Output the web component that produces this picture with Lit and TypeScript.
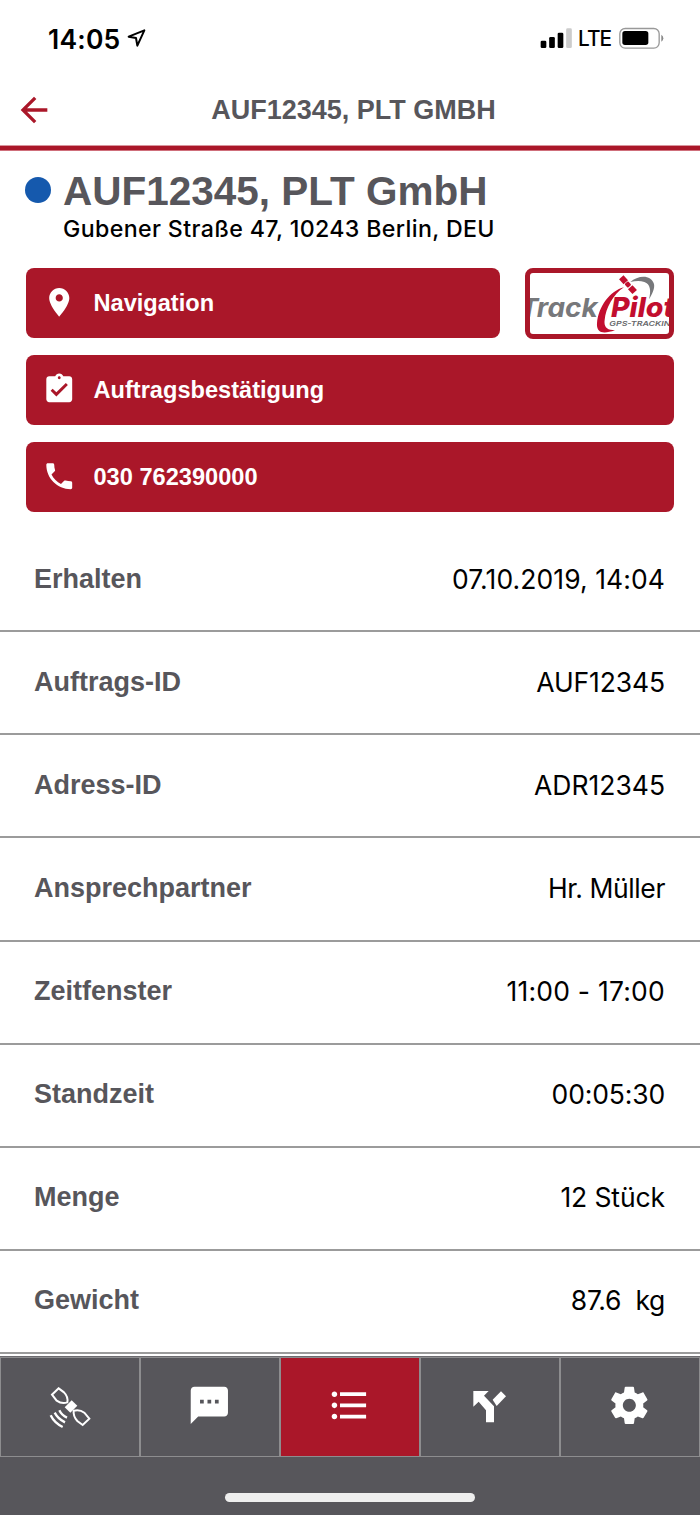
import { LitElement, html, css, svg } from "lit";
import { customElement, property } from "lit/decorators.js";
import { styleMap } from "lit/directives/style-map.js";

const icons = {
  back: "M20 11H7.83l5.59-5.59L12 4l-8 8 8 8 1.41-1.41L7.83 13H20v-2z",
  place:
    "M12 2C8.13 2 5 5.13 5 9c0 5.25 7 13 7 13s7-7.75 7-13c0-3.87-3.13-7-7-7zm0 9.5c-1.38 0-2.5-1.12-2.5-2.5s1.12-2.5 2.5-2.5 2.5 1.12 2.5 2.5-1.12 2.5-2.5 2.5z",
  confirm:
    "M19 3h-4.18C14.4 1.84 13.3 1 12 1c-1.3 0-2.4.84-2.82 2H5c-1.1 0-2 .9-2 2v14c0 1.1.9 2 2 2h14c1.1 0 2-.9 2-2V5c0-1.1-.9-2-2-2zm-7 0c.55 0 1 .45 1 1s-.45 1-1 1-1-.45-1-1 .45-1 1-1zm-2 14l-4-4 1.41-1.41L10 14.17l6.59-6.59L18 9l-8 8z",
  phone:
    "M6.62 10.79c1.44 2.83 3.76 5.14 6.59 6.59l2.2-2.2c.27-.27.67-.36 1.02-.24 1.12.37 2.33.57 3.57.57.55 0 1 .45 1 1V20c0 .55-.45 1-1 1-9.39 0-17-7.61-17-17 0-.55.45-1 1-1h3.5c.55 0 1 .45 1 1 0 1.25.2 2.45.57 3.57.11.35.03.74-.25 1.02l-2.2 2.2z",
  chat: "M20 2H4c-1.1 0-1.99.9-1.99 2L2 22l4-4h14c1.1 0 2-.9 2-2V4c0-1.1-.9-2-2-2zM9 11H7V9h2v2zm4 0h-2V9h2v2zm4 0h-2V9h2v2z",
  list: "M4 10.5c-.83 0-1.5.67-1.5 1.5s.67 1.5 1.5 1.5 1.5-.67 1.5-1.5-.67-1.5-1.5-1.5zm0-6c-.83 0-1.5.67-1.5 1.5S3.17 7.5 4 7.5 5.5 6.83 5.5 6 4.83 4.5 4 4.5zm0 12c-.83 0-1.5.68-1.5 1.5s.68 1.5 1.5 1.5 1.5-.68 1.5-1.5-.67-1.5-1.5-1.5zM7 19h14v-2H7v2zm0-6h14v-2H7v2zm0-8v2h14V5H7z",
  gear: "M19.43 12.98c.04-.32.07-.64.07-.98s-.03-.66-.07-.98l2.11-1.65c.19-.15.24-.42.12-.64l-2-3.46c-.12-.22-.39-.3-.61-.22l-2.49 1c-.52-.4-1.08-.73-1.69-.98l-.38-2.65C14.46 2.18 14.25 2 14 2h-4c-.25 0-.46.18-.49.42l-.38 2.65c-.61.25-1.17.59-1.69.98l-2.49-1c-.23-.09-.49 0-.61.22l-2 3.46c-.13.22-.07.49.12.64l2.11 1.65c-.04.32-.07.65-.07.98s.03.66.07.98l-2.11 1.65c-.19.15-.24.42-.12.64l2 3.46c.12.22.39.3.61.22l2.49-1c.52.4 1.08.73 1.69.98l.38 2.65c.03.24.24.42.49.42h4c.25 0 .46-.18.49-.42l.38-2.65c.61-.25 1.17-.59 1.69-.98l2.49 1c.23.09.49 0 .61-.22l2-3.46c.12-.22.07-.49-.12-.64l-2.11-1.65zM12 15.5c-1.93 0-3.5-1.57-3.5-3.5s1.57-3.5 3.5-3.5 3.5 1.57 3.5 3.5-1.57 3.5-3.5 3.5z",
};

const glyph = (d: string) =>
  html`<svg class="glyph" viewBox="0 0 24 24" fill="currentColor">${svg`<path d=${d}></path>`}</svg>`;

@customElement("status-bar")
class StatusBar extends LitElement {
  static styles = css`
    :host { display: flex; height: 76px; box-sizing: border-box; padding: 25px 36px 0 48px; justify-content: space-between; font-family: Inter, sans-serif; color: #000; }
    .side { display: flex; align-items: flex-start; }
    .time { font-size: 26.5px; line-height: 28px; font-weight: 600; width: 79px; white-space: nowrap; letter-spacing: 0.2px; }
    .loc { width: 20px; height: 19px; margin-top: 4px; }
    .signal { width: 32px; height: 21px; margin-top: 3px; }
    .net { font-size: 20.800px; line-height: 28px; width: 41px; margin-left: 6.500px; white-space: nowrap; letter-spacing: -0.9px; font-weight: 450; }
    .battery { width: 45px; height: 22px; margin-top: 2px; }
  `;
  render() {
    return html`
      <div class="side">
        <span class="time">14:05</span>
        <svg class="loc" viewBox="381 87 60 57">
          <path d="M386 110 L433 91 L412 137 L408 114 Z" fill="none" stroke="#000" stroke-width="6" stroke-linejoin="round" />
        </svg>
      </div>
      <div class="side">
        <svg class="signal" viewBox="567 84 96 63">
          <rect x="569" y="122" width="17" height="22" rx="4" />
          <rect x="594.500" y="111" width="17" height="33" rx="4" />
          <rect x="620" y="98" width="17" height="46" rx="4" />
          <rect x="645.500" y="85" width="17" height="59" rx="4" fill="#ccc" />
        </svg>
        <span class="net">LTE</span>
        <svg class="battery" viewBox="806 81 135 66">
          <rect x="808.500" y="85.500" width="118" height="59" rx="16" fill="none" stroke="#999" stroke-width="4" />
          <rect x="816" y="93" width="78" height="42" rx="8" />
          <path d="M933 104 Q939 108 939 114.500 Q939 121 933 125 Z" fill="#888" />
        </svg>
      </div>
    `;
  }
}

@customElement("title-bar")
class TitleBar extends LitElement {
  static styles = css`
    :host { display: block; }
    .bar { height: 69px; display: grid; grid-template-columns: 67px 1fr 60px; align-items: center; }
    .back { color: #aa1729; width: 40px; height: 40px; margin-left: 13.500px; margin-top: -2px; }
    .glyph { width: 100%; height: 100%; display: block; }
    .title { font: bold 27px/32px "Liberation Sans", sans-serif; color: #57565b; text-align: center; margin-top: -2px; white-space: nowrap; }
    .rule { height: 6px; background: linear-gradient(#d9959d 0 1px, #aa1729 1px 5px, #cf6f7b 5px 6px); }
  `;
  render() {
    return html`
      <div class="bar">
        <div class="back">${glyph(icons.back)}</div>
        <div class="title">AUF12345, PLT GMBH</div>
      </div>
      <div class="rule"></div>
    `;
  }
}

@customElement("action-button")
class ActionButton extends LitElement {
  @property() icon: keyof typeof icons = "place";
  @property() label = "";
  static styles = css`
    :host { display: flex; align-items: center; height: 70px; box-sizing: border-box; padding-left: 16px; background: #aa1729; color: #fff; border-radius: 8px; flex: 1; }
    .glyph { width: 34.500px; height: 34.500px; margin-top: -2.500px; display: block; }
    .label { font: bold 23.600px/30px "Liberation Sans", sans-serif; margin-left: 17px; white-space: nowrap; }
  `;
  render() {
    return html`${glyph(icons[this.icon])}<span class="label">${this.label}</span>`;
  }
}

@customElement("brand-logo")
class BrandLogo extends LitElement {
  static styles = css`
    :host { display: block; width: 149px; height: 71px; box-sizing: border-box; border: 5px solid #aa1729; border-radius: 8px; overflow: hidden; background: #fff; }
    .art { display: block; width: 139px; height: 61px; }
    .word { font: italic 700 78px Inter, sans-serif; }
    .accent { font: italic 800 83px Inter, sans-serif; }
    .small { font: italic 600 20px Inter, sans-serif; }
  `;
  render() {
    return html`
      <svg class="art" viewBox="61 55 417 183">
        <text class="word" x="30" y="188" fill="#77787b" textLength="234" lengthAdjust="spacingAndGlyphs">Track</text>
        <path d="M362 82 C384 62 424 58 433 88 C436 102 427 119 418 134 C425 108 422 88 404 82 C390 77 376 79 362 82 Z" fill="#77787b" />
        <path d="M343 98 C301 108 266 156 262 206 C260 236 281 239 316 227 C292 227 282 218 285 196 C288 161 311 118 343 98 Z" fill="#c20e2f" />
        <g transform="rotate(48 355 90)" fill="#c20e2f">
          <rect x="325" y="81" width="20" height="18" />
          <rect x="347" y="83" width="15" height="14" rx="3" />
          <rect x="365" y="81" width="20" height="18" />
        </g>
        <text class="accent" x="304" y="188" fill="#c20e2f" textLength="190" lengthAdjust="spacingAndGlyphs">Pilot</text>
        <text class="small" x="299" y="213" fill="#66676a" textLength="203" lengthAdjust="spacingAndGlyphs">GPS-TRACKING</text>
      </svg>
    `;
  }
}

@customElement("detail-row")
class DetailRow extends LitElement {
  @property() label = "";
  @property() value = "";
  @property({ type: Number }) tracking = 0;
  static styles = css`
    :host { display: flex; align-items: center; justify-content: space-between; height: 103.140px; box-sizing: border-box; border-bottom: 2px solid #9b9b9b; padding: 0 35px 2px 34px; }
    .label { font: bold 27px/32px "Liberation Sans", sans-serif; color: #57565b; }
    .value { font: 400 26.500px/32px Inter, sans-serif; color: #000; white-space: pre; }
  `;
  render() {
    return html`<span class="label">${this.label}</span
      ><span class="value" style=${styleMap({ letterSpacing: `${this.tracking}px` })}>${this.value}</span>`;
  }
}

@customElement("tab-bar")
class TabBar extends LitElement {
  static styles = css`
    :host { display: flex; flex-direction: column; align-items: center; background: #57565b; height: 159px; }
    .tabs { width: 100%; height: 101px; box-sizing: border-box; display: grid; grid-template-columns: 138px 138px 138px 138px 138px; column-gap: 2px; padding: 2px 1px 1px; background: linear-gradient(#6c6b6f 0 1px, #8d8d8f 1px); }
    .tab { background: #57565b; color: #fff; display: flex; align-items: center; justify-content: center; }
    .active { background: #aa1729; }
    .glyph { width: 44.700px; height: 44.700px; display: block; margin-top: -3px; margin-right: 0.600px; }
    .sat { width: 42px; height: 43px; margin-right: 1px; }
    .fork { width: 36px; height: 34px; margin-top: 0; margin-right: 1px; }
    .home { width: 250px; height: 9px; border-radius: 5px; background: #eee; margin-top: 35.500px; }
  `;
  render() {
    return html`
      <div class="tabs">
        <div class="tab">
          <svg class="sat" viewBox="147 137 126 129" fill="none" stroke="#fff" stroke-width="6">
            <path d="M176 144 L156 163 L170 181 Q186 192 202 186 Q205 169 192 156 Z" />
            <path d="M221 211 Q239 206 253 217 L268 235 L248 254 L232 242 Q219 228 221 211 Z" />
            <path d="M215 180 L232 196 L211 217 L194 201 Z" fill="#fff" stroke="none" />
            <path d="M152 225 Q163 248 188 260 M164 217 Q174 236 195 246 M178 210 Q185 225 201 232" stroke-width="7" />
          </svg>
        </div>
        <div class="tab">${glyph(icons.chat)}</div>
        <div class="tab active">${glyph(icons.list)}</div>
        <div class="tab">
          <svg class="fork" viewBox="366 148 108 102" fill="#fff">
            <path d="M370 151 H416 L402 165 L432 197 V245 H408 V209 L386 183 L370 198 Z" />
            <path d="M428 177 L453 152 L468 167 L440 196 Z" />
          </svg>
        </div>
        <div class="tab">${glyph(icons.gear)}</div>
      </div>
      <div class="home"></div>
    `;
  }
}

const details: [string, string, number][] = [
  ["Erhalten", "07.10.2019, 14:04", 0.08],
  ["Auftrags-ID", "AUF12345", -0.12],
  ["Adress-ID", "ADR12345", 0],
  ["Ansprechpartner", "Hr. Müller", -0.4],
  ["Zeitfenster", "11:00 - 17:00", 0.22],
  ["Standzeit", "00:05:30", -0.15],
  ["Menge", "12 Stück", -0.1],
  ["Gewicht", "87.6  kg", -0.3],
];

@customElement("app-root")
class AppRoot extends LitElement {
  static styles = css`
    :host { display: flex; flex-direction: column; height: 1515px; background: #fff; overflow: hidden; }
    .head { display: grid; grid-template-columns: 26px 1fr; column-gap: 12px; padding: 17px 25px 0; height: 117px; box-sizing: border-box; align-content: start; }
    .dot { width: 26px; height: 26px; border-radius: 50%; background: #1559ad; margin-top: 9px; }
    .name { font: bold 40.500px/46px "Liberation Sans", sans-serif; color: #57565b; white-space: nowrap; }
    .address { grid-column: 2; font: 500 23.200px/28px Inter, sans-serif; letter-spacing: 0.36px; color: #000; margin-top: 1px; white-space: nowrap; }
    .actions { display: flex; flex-direction: column; gap: 17px; padding: 0 26px; }
    .line { display: flex; height: 70px; gap: 25px; }
    .rows { margin-top: 17px; flex: 1; }
  `;
  render() {
    return html`
      <status-bar></status-bar>
      <title-bar></title-bar>
      <div class="head">
        <div class="dot"></div>
        <div class="name">AUF12345, PLT GmbH</div>
        <div class="address">Gubener Straße 47, 10243 Berlin, DEU</div>
      </div>
      <div class="actions">
        <div class="line">
          <action-button icon="place" label="Navigation"></action-button>
          <brand-logo></brand-logo>
        </div>
        <div class="line"><action-button icon="confirm" label="Auftragsbestätigung"></action-button></div>
        <div class="line"><action-button icon="phone" label="030 762390000"></action-button></div>
      </div>
      <div class="rows">
        ${details.map(
          ([label, value, tracking]) =>
            html`<detail-row .label=${label} .value=${value} .tracking=${tracking}></detail-row>`
        )}
      </div>
      <tab-bar></tab-bar>
    `;
  }
}
